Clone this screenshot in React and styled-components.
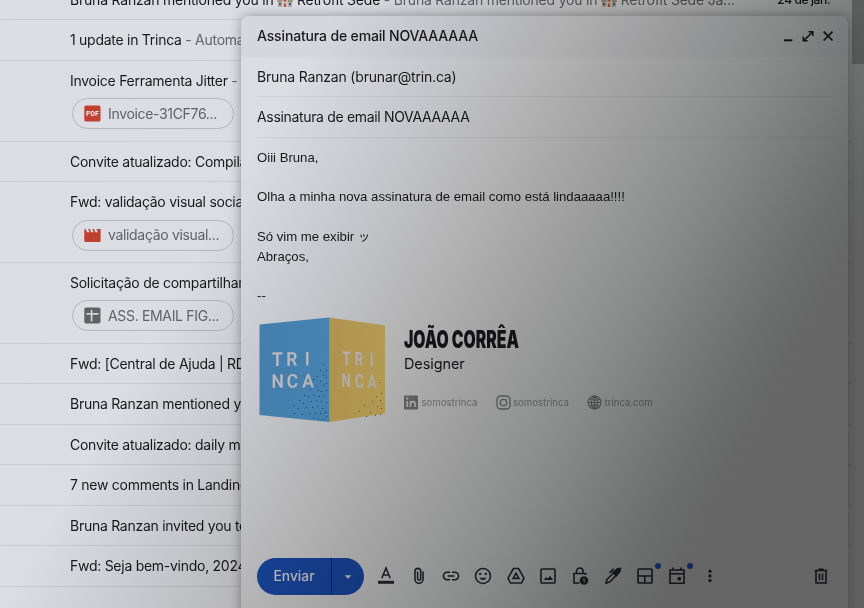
import React from 'react'
import styled, { createGlobalStyle } from "styled-components";

const mails = [
  { title: "1 update in Trinca", preview: "Automatic update" },
  { title: "Invoice Ferramenta Jitter", preview: "Invoice", file: { kind: "pdf", name: "Invoice-31CF76..." } },
  { title: "Convite atualizado: Compilado" },
  { title: "Fwd: validação visual social", file: { kind: "video", name: "validação visual..." } },
  { title: "Solicitação de compartilhamento", file: { kind: "sheet", name: "ASS. EMAIL FIG..." } },
  { title: "Fwd: [Central de Ajuda | RD" },
  { title: "Bruna Ranzan mentioned you" },
  { title: "Convite atualizado: daily m" },
  { title: "7 new comments in Landing" },
  { title: "Bruna Ranzan invited you to" },
  { title: "Fwd: Seja bem-vindo, 2024" },
];

const leftDots = [
  [64, 47], [61, 53], [67, 53], [58, 59], [64, 58], [54, 62], [67, 60], [61, 64], [57, 69], [64, 68],
  [67, 66], [51, 72], [59, 73], [62, 74], [67, 73], [45, 78], [49, 79], [55, 78], [60, 79], [65, 78],
  [40, 83], [44, 86], [52, 84], [57, 83], [62, 84], [67, 85], [34, 88], [39, 91], [47, 90], [53, 90],
  [58, 89], [63, 91], [35, 96], [43, 97], [50, 96], [56, 96], [61, 96], [66, 95], [54, 101], [59, 101], [64, 102], [67, 99],
];

const rightDots = [
  [120, 65], [122, 76], [117, 79], [113, 84], [121, 83], [105, 88], [118, 89], [122, 91],
  [100, 94], [111, 95], [121, 97], [107, 99], [116, 98],
];

function House() {
  return (
    <HouseSvg viewBox="0 0 16 16">
      <path d="M1 9L4 4h8l3 5v6H1z" fill="#c9c5bd" />
      <path d="M3 4h10l-2-3H5z" fill="#706c6c" />
      <path d="M0 9l4-4 4 4v1H0zM8 9l4-4 4 4v1H8z" fill="#b9a48a" />
      <rect x="5" y="5" width="6" height="10" fill="#e8e3db" />
      <path d="M6.500 7.500h3v2h-3zM7 11.500h2V15H7z" fill="#e0603a" />
      <path d="M2 11h2v2H2zM12 11h2v2h-2z" fill="#5f6978" />
    </HouseSvg>
  )
}

function FileIcon({ kind }) {
  if (kind === "pdf") {
    return (
      <svg width="17" height="17" viewBox="0 0 17 17">
        <rect x="0.300" y="0.500" width="16.200" height="16" rx="1.500" fill="#e04a39" />
        <text x="8.400" y="11.300" textAnchor="middle" fontFamily="Roboto, sans-serif" fontWeight="900" fontSize="7" letterSpacing="0" fill="#fff">PDF</text>
      </svg>
    )
  }
  if (kind === "video") {
    return (
      <svg width="17" height="17" viewBox="0 0 17 17">
        <path d="M1.500 2l1.600 3.200h2.500L4 2h1.700l1.600 3.200h2.500L8.200 2h1.700l1.600 3.200H14L12.400 2h4.200v11.800a1.300 1.300 0 0 1-1.300 1.300H1.600a1.300 1.300 0 0 1-1.300-1.300V3.200A1.300 1.300 0 0 1 1.500 2z" fill="#dd4937" />
      </svg>
    )
  }
  return (
    <svg width="17" height="17" viewBox="0 0 17 17">
      <rect x="0.300" y="0.500" width="16.200" height="16" rx="1.800" fill="#707070" />
      <path d="M2.500 6.800h12M7.600 3v11.500" stroke="#f2f3f5" strokeWidth="1.700" />
    </svg>
  )
}

function Cube() {
  return (
    <CubeSvg viewBox="0 0 127 106">
      <defs>
        <linearGradient id="blueSide" x1="0" y1="0" x2="1" y2=".5">
          <stop offset="0" stopColor="#549cd0" />
          <stop offset="1" stopColor="#5eb0ea" />
        </linearGradient>
        <linearGradient id="yellowSide" x1="0" y1="0" x2="1" y2=".5">
          <stop offset="0" stopColor="#e8c167" />
          <stop offset="1" stopColor="#ffdc74" />
        </linearGradient>
      </defs>
      <path d="M0.500 7.500L70 0.500V105L0.500 98z" fill="url(#blueSide)" />
      <path d="M70 0.500L126 8.500V96.500L70 105z" fill="url(#yellowSide)" />
      {leftDots.map(([x, y]) => <rect key={x + "-" + y} x={x} y={y} width="1" height="1" fill="#1c50a8" />)}
      {rightDots.map(([x, y]) => <rect key={x + "-" + y} x={x} y={y} width="1" height="1" fill="#7c7656" />)}
      <CubeText transform="translate(19 49) skewY(-1) scale(0.92 1)">
        <text x="-6.500" y="0">T</text>
        <text x="9" y="0">R</text>
        <text x="29" y="0">I</text>
        <text x="-7" y="22">N</text>
        <text x="9.500" y="22">C</text>
        <text x="26.500" y="22">A</text>
      </CubeText>
      <CubeText transform="translate(80 48) skewY(2) scale(0.7 1)">
        <text x="5" y="0">T</text>
        <text x="22.500" y="0">R</text>
        <text x="44" y="0">I</text>
        <text x="3.500" y="22">N</text>
        <text x="23" y="22">C</text>
        <text x="41" y="22">A</text>
      </CubeText>
    </CubeSvg>
  )
}

const tools = [
  { name: "format", art: <><path d="M5.800 12.200L10 2l4.200 10.200M7.300 9h5.400" /><path d="M2 16.300h16" strokeWidth="3" /></> },
  { name: "attach", art: <path d="M14 6v7.800a4 4 0 0 1-8 0V5.200a2.900 2.900 0 0 1 5.700 0v8a1.500 1.500 0 0 1-3.100 0V6" transform="translate(0 -.5)" /> },
  { name: "link", art: <path d="M9 6.200H6.200a3.800 3.800 0 0 0 0 7.600H9M11 6.200h2.800a3.800 3.800 0 0 1 0 7.600H11M6.700 10h6.600" /> },
  { name: "emoji", art: <><circle cx="10" cy="10" r="7.500" /><path d="M6.500 11.800a3.800 3.800 0 0 0 7 0z" fill="currentColor" stroke="none" /><circle cx="7.200" cy="7.900" r="1.200" fill="currentColor" stroke="none" /><circle cx="12.800" cy="7.900" r="1.200" fill="currentColor" stroke="none" /></> },
  { name: "drive", art: <><path d="M7.500 2.500h5l5.500 9.700-2.400 4.800H4.400L2 12.200z" strokeLinejoin="round" /><path d="M10 7.200l-2.900 5.200h5.800z" /></> },
  { name: "image", art: <><rect x="3" y="3" width="14" height="14" rx=".8" /><path d="M5.800 14l2.400-3.200 1.600 2 2.200-3L15 14z" fill="currentColor" stroke="none" /></> },
  { name: "lock", art: <><path d="M9.500 17H4V7.500h11.500V9M6.500 7.500V5.300a3.200 3.200 0 0 1 6.500 0v2.200" /><circle cx="14" cy="14.500" r="4.300" fill="currentColor" stroke="none" /><path d="M14 12v2.700l1.500 1.200" stroke="#d8d8d8" strokeWidth="1.100" /></> },
  { name: "pen", art: <><path d="M3 17l1-3.700L11 6.500 13.500 9 6.700 16z" /><path d="M6.500 6.800l4.300-4" /><path d="M10 6.500l4.500-3.700 2.800-.3-.3 2.800-3.700 4.500z" fill="currentColor" /></> },
  { name: "layout", dot: true, art: <><rect x="3" y="3" width="14" height="14" rx=".8" /><path d="M3 10h14M9.800 10v7" /></> },
  { name: "calendar", dot: true, art: <><path d="M3 4h14v13.200H3zM3 7.800h14M6 1.500V4M14 1.500V4" /><circle cx="12.200" cy="12.700" r="1.900" fill="currentColor" stroke="none" /></> },
  { name: "more", art: <g fill="currentColor" stroke="none"><circle cx="10" cy="5.200" r="1.600" /><circle cx="10" cy="9.900" r="1.600" /><circle cx="10" cy="14.600" r="1.600" /></g> },
];

function App() {
  return (
    <Page>
      <GlobalStyle />
      <Inbox>
        <Mail>
          <Subject $spacing="-0.21px">
            Bruna Ranzan mentioned you in <House /> Retrofit Sede
            <Preview> - Bruna Ranzan mentioned you in <House /> Retrofit Sede Ja...</Preview>
          </Subject>
          <MailDate>24 de jan.</MailDate>
        </Mail>
        {mails.map((mail) => (
          <Mail key={mail.title} $tall={!!mail.file}>
            <Subject>
              {mail.title}
              {mail.preview && <Preview> - {mail.preview}</Preview>}
            </Subject>
            {mail.file && (
              <Chip>
                <FileIcon kind={mail.file.kind} />
                {mail.file.name}
              </Chip>
            )}
          </Mail>
        ))}
      </Inbox>
      <Scrollbar><Thumb /></Scrollbar>

      <Compose>
        <Header>
          <Title>Assinatura de email NOVAAAAAA</Title>
          <WindowIcon viewBox="0 0 12 12"><path d="M2 10.300h8.300" strokeWidth="2" /></WindowIcon>
          <WindowIcon viewBox="0 0 12 12"><path d="M6.500 1.700h4.300V6M1.300 6.500v4.300h4.300M10.500 2L1.700 10.600" /></WindowIcon>
          <WindowIcon viewBox="0 0 12 12"><path d="M1.700 1.700l8.800 8.800M10.500 1.700l-8.800 8.800" strokeWidth="1.700" /></WindowIcon>
        </Header>
        <Field>Bruna Ranzan (brunar@trin.ca)</Field>
        <Field $spacing="-0.33px">Assinatura de email NOVAAAAAA</Field>
        <Message>
          Oiii Bruna,<br /><br />
          Olha a minha nova assinatura de email como está lindaaaaa!!!!<br /><br />
          Só vim me exibir <Smile>ッ</Smile><br />
          Abraços,<br /><br />
          --
        </Message>
        <Signature>
          <Cube />
          <div>
            <Name>JOÃO CORRÊA</Name>
            <Role>Designer</Role>
            <Socials>
              <Social $width="91.5px">
                <svg width="15" height="15" viewBox="0 0 15 15">
                  <rect x="0" y=".5" width="14" height="14" rx="1" fill="currentColor" />
                  <path d="M3.300 6v6M6.500 12V6M6.500 9c0-3.300 4.500-3.300 4.500 0v3" fill="none" stroke="#f4f4f4" strokeWidth="1.700" />
                  <circle cx="3.300" cy="3.600" r="1.100" fill="#f4f4f4" />
                </svg>
                <span>somostrinca</span>
              </Social>
              <Social $width="91.5px">
                <svg width="15" height="15" viewBox="0 0 15 15" fill="none" stroke="currentColor" strokeWidth="1.300">
                  <rect x="1" y="1" width="13" height="13" rx="3.500" />
                  <circle cx="7.500" cy="7.500" r="3.200" />
                  <circle cx="11.200" cy="3.800" r=".6" fill="currentColor" stroke="none" />
                </svg>
                <span>somostrinca</span>
              </Social>
              <Social $width="80px">
                <svg width="15" height="15" viewBox="0 0 15 15" fill="none" stroke="currentColor" strokeWidth="1.100">
                  <circle cx="7.500" cy="7.500" r="6.500" />
                  <path d="M1 7.500h13M7.500 1v13M2.500 3.800c3 1.600 7 1.600 10 0M2.500 11.200c3-1.600 7-1.600 10 0M7.500 1c-4.500 3.500-4.500 9.500 0 13M7.500 1c4.500 3.500 4.500 9.500 0 13" />
                </svg>
                <span>trinca.com</span>
              </Social>
            </Socials>
          </div>
        </Signature>
        <Toolbar>
          <SendGroup>
            <Send>Enviar</Send>
            <SendMore><svg width="8" height="4" viewBox="0 0 9 5"><path d="M.3.300h8.400L4.500 4.700z" fill="currentColor" /></svg></SendMore>
          </SendGroup>
          {tools.map((tool) => (
            <Tool key={tool.name} aria-label={tool.name}>
              <ToolSvg viewBox="0 0 20 20">{tool.art}</ToolSvg>
              {tool.dot && <Dot />}
            </Tool>
          ))}
          <Trash aria-label="trash">
            <ToolSvg viewBox="0 0 20 20"><path d="M5 5v12h10V5M3.700 4.500h12.600M7.500 3.300h5M8.500 7.500v6.800M11.500 7.500v6.800" /></ToolSvg>
          </Trash>
        </Toolbar>
      </Compose>
      <Shade />
    </Page>
  )
}

const GlobalStyle = createGlobalStyle`
  body{
    margin: 0;
    overflow: hidden;
    background: #fff;
  }
  *{
    box-sizing: border-box;
  }
`;

const Page = styled.div`
  position: relative;
  width: 864px;
  height: 608px;
  overflow: hidden;
  display: flex;
  background: #fff;
  color: #1d1d20;
  font-family: Inter, "Liberation Sans", sans-serif;
  font-size: 14px;
  letter-spacing: -0.18px;
`;

/* light falling off from the top left corner */
const Shade = styled.div`
  position: absolute;
  inset: 0;
  pointer-events: none;
  mix-blend-mode: multiply;
  background: linear-gradient(118.5deg, #dddee4 0%, #dcdde3 28%, #c5c6cb 40%, #b5b5b6 48%, #9d9d9d 58.5%, #8b8e8d 66%, #7a7d7c 72.5%, #6b6c6c 79%, #666666 83%, #656565 100%);
`;

const Inbox = styled.div`
  flex: 1;
  margin-top: -20px;
`;

const Mail = styled.div`
  height: ${(props) => (props.$tall ? "80.9px" : "40.45px")};
  padding: 0 22px 0 70px;
  border-bottom: 1px solid #ececee;
  display: flex;
  flex-direction: ${(props) => (props.$tall ? "column" : "row")};
  justify-content: ${(props) => (props.$tall ? "flex-start" : "space-between")};
  line-height: 40px;
  white-space: nowrap;
`;

const Subject = styled.div`
  height: 37.300px;
  letter-spacing: ${(props) => props.$spacing || "-0.27px"};
`;

const Preview = styled.span`
  color: #737376;
`;

const MailDate = styled.div`
  font-size: 12px;
  font-weight: 500;
  letter-spacing: -0.4px;
`;

const HouseSvg = styled.svg`
  width: 16px;
  height: 16px;
  vertical-align: -3px;
`;

const Chip = styled.div`
  flex: none;
  width: 162px;
  height: 31px;
  margin-left: 2px;
  padding-left: 11px;
  border: 1px solid #d2d3d6;
  border-radius: 16px;
  display: flex;
  align-items: center;
  gap: 7px;
  color: #717174;
  line-height: 20px;
  letter-spacing: -0.33px;
`;

const Scrollbar = styled.div`
  width: 12px;
  background: #f3f3f3;
`;

const Thumb = styled.div`
  height: 64px;
  background: #bdbdbd;
`;

const Compose = styled.div`
  position: absolute;
  left: 241px;
  top: 16px;
  width: 607px;
  height: 600px;
  display: flex;
  flex-direction: column;
  background: #fff;
  border-radius: 8px 8px 0 0;
  box-shadow: 0 0 12px rgba(0, 0, 0, 0.35);
`;

const Header = styled.div`
  height: 41px;
  padding: 0 14.500px 2px 16px;
  display: flex;
  align-items: center;
  gap: 8px;
  background: #f9f9fa;
  border-radius: 8px 8px 0 0;
`;

const Title = styled.div`
  flex: 1;
  font-weight: 500;
  letter-spacing: -0.15px;
`;

const WindowIcon = styled.svg`
  width: 12px;
  height: 12px;
  margin-top: 1px;
  fill: none;
  stroke: #1d1d22;
  stroke-width: 1.5;
`;

const Field = styled.div`
  height: 40.300px;
  margin: 0 16px;
  border-bottom: 1px solid #f0f0f0;
  line-height: 39px;
  letter-spacing: ${(props) => props.$spacing || "-0.18px"};
`;

const Message = styled.div`
  padding: 10px 16px 0;
  font-family: "Liberation Sans", "Noto Sans CJK JP", sans-serif;
  font-size: 13.200px;
  letter-spacing: -0.015px;
  line-height: 19.800px;
`;

const Smile = styled.span`
  font-size: 12px;
  line-height: 1;
`;

const Signature = styled.div`
  display: flex;
  gap: 18px;
  padding: 11px 0 0 18px;
`;

const CubeSvg = styled.svg`
  width: 127px;
  height: 106px;
`;

const CubeText = styled.g`
  font-family: Roboto, sans-serif;
  font-size: 19px;
  font-weight: 600;
  letter-spacing: 0;
  fill: #f2eff0;
`;

const Name = styled.div`
  height: 27px;
  margin-top: 9px;
  font-weight: 900;
  font-size: 24px;
  line-height: 27px;
  letter-spacing: 0;
  white-space: nowrap;
  transform: scaleX(0.655);
  transform-origin: 0 0;
`;

const Role = styled.div`
  margin-top: 2px;
  font-size: 14.500px;
  line-height: 18px;
  letter-spacing: -0.1px;
`;

const Socials = styled.div`
  display: flex;
  margin-top: 22px;
`;

const Social = styled.div`
  width: ${(props) => props.$width};
  display: flex;
  align-items: center;
  gap: 2.500px;
  font-size: 9.600px;
  letter-spacing: 0;
  color: #8c8c8c;
  svg{
    flex: none;
  }
  span{
    color: #a2a2a2;
  }
`;

const Toolbar = styled.div`
  height: 37px;
  margin: auto 11px 21px 16px;
  display: flex;
  align-items: center;
`;

const SendGroup = styled.div`
  display: flex;
  height: 36.500px;
  margin-right: 6px;
  border-radius: 19px;
  overflow: hidden;
  background: #1f58c8;
  color: #fff;
`;

const Send = styled.button`
  width: 75px;
  padding: 0 0 1px;
  border: 0;
  border-right: 1px solid #1c2c54;
  background: none;
  color: inherit;
  font: 500 13.800px Inter, sans-serif;
`;

const SendMore = styled.button`
  width: 32px;
  padding: 0;
  border: 0;
  display: flex;
  align-items: center;
  justify-content: center;
  background: none;
  color: inherit;
`;

const Tool = styled.button`
  position: relative;
  width: 32.350px;
  height: 30px;
  padding: 0 0 2px;
  border: 0;
  display: flex;
  align-items: center;
  justify-content: center;
  background: none;
  color: #303137;
`;

const Trash = styled(Tool)`
  margin-left: auto;
`;

const ToolSvg = styled.svg`
  width: 20px;
  height: 20px;
  fill: none;
  stroke: currentColor;
  stroke-width: 1.6;
`;

const Dot = styled.span`
  position: absolute;
  top: 1px;
  right: 0;
  width: 6px;
  height: 6px;
  border-radius: 50%;
  background: #2b67d8;
`;

export default App;
